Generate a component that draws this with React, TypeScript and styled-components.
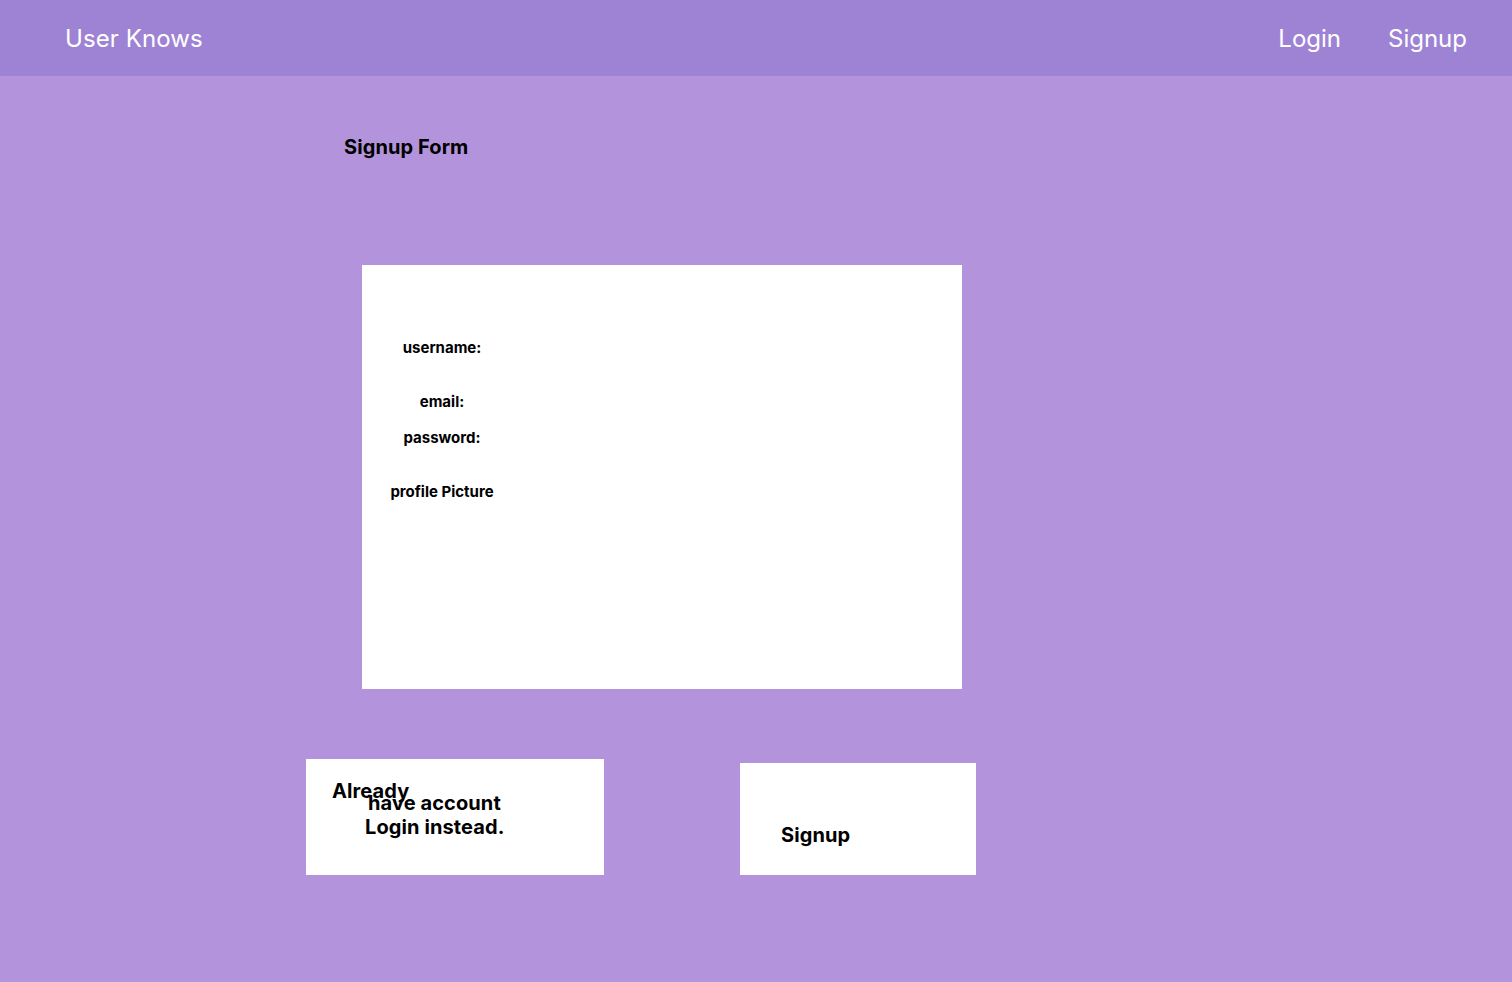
import React from "react";
import styled, { createGlobalStyle } from "styled-components";

const Global = createGlobalStyle`
  html, body { margin: 0; padding: 0; }
  body {
    background: #b394dc;
    font-family: Inter, "Noto Sans", sans-serif;
    min-height: 982px;
  }
`;

const Header = styled.header`
  height: 76px;
  background: #9e83d5;
  display: flex;
  align-items: center;
  justify-content: space-between;
  padding: 0 45px 0 65px;
  color: #ffffff;
`;

const Brand = styled.div`
  font-size: 24px;
  font-weight: 400;
  letter-spacing: 0.1px;
`;

const Nav = styled.nav`
  display: flex;
  gap: 47px;
`;

const NavLink = styled.a`
  font-size: 24px;
  color: #ffffff;
  text-decoration: none;
  cursor: pointer;
`;

const Main = styled.main`
  padding-top: 59px;
  display: flex;
  flex-direction: column;
`;

const Title = styled.h1`
  margin: 0 0 106px 344px;
  font-size: 20px;
  line-height: 24px;
  font-weight: 700;
  color: #000;
  letter-spacing: 0.1px;
`;

const FormCard = styled.form`
  margin-left: 362px;
  width: 600px;
  height: 424px;
  background: #ffffff;
  padding-top: 74px;
  box-sizing: border-box;
  display: flex;
  flex-direction: column;
`;

const Field = styled.div<{ $after: number }>`
  width: 160px;
  text-align: center;
  font-size: 15px;
  line-height: 18px;
  margin-bottom: ${(p) => p.$after}px;
`;

const Label = styled.label`
  display: block;
  font-size: 15px;
  line-height: 18px;
  font-weight: 700;
  color: #000;
`;

const Actions = styled.div`
  margin-top: 70px;
  margin-left: 306px;
  display: flex;
  align-items: flex-end;
  gap: 136px;
`;

const LoginBox = styled.button`
  width: 298px;
  height: 116px;
  background: #fff;
  border: none;
  padding: 20px 0 0 26px;
  box-sizing: border-box;
  display: flex;
  flex-direction: column;
  align-items: flex-start;
  font-family: inherit;
  font-size: 20px;
  line-height: 24px;
  font-weight: 700;
  color: #000;
  text-align: left;
  cursor: pointer;
  letter-spacing: 0.1px;
`;

const Line = styled.span<{ $indent: number; $pull?: number }>`
  display: block;
  margin-left: ${(p) => p.$indent}px;
  margin-top: ${(p) => -(p.$pull ?? 0)}px;
  white-space: nowrap;
`;

const SignupBox = styled.button`
  width: 236px;
  height: 112px;
  background: #fff;
  border: none;
  padding: 60px 0 0 41px;
  box-sizing: border-box;
  display: flex;
  align-items: flex-start;
  font-family: inherit;
  font-size: 20px;
  line-height: 24px;
  font-weight: 700;
  color: #000;
  cursor: pointer;
  letter-spacing: 0.1px;
`;

export default function App() {
  return (
    <>
      <Global />
      <Header>
        <Brand>User Knows</Brand>
        <Nav>
          <NavLink>Login</NavLink>
          <NavLink>Signup</NavLink>
        </Nav>
      </Header>
      <Main>
        <Title>Signup Form</Title>
        <FormCard onSubmit={(e) => e.preventDefault()}>
          <Field $after={36}>
            <Label>username:</Label>
          </Field>
          <Field $after={18}>
            <Label>email:</Label>
          </Field>
          <Field $after={36}>
            <Label>password:</Label>
          </Field>
          <Field $after={0}>
            <Label>profile Picture</Label>
          </Field>
        </FormCard>
        <Actions>
          <LoginBox type="button">
            <Line $indent={0}>Already</Line>
            <Line $indent={36} $pull={12}>have account</Line>
            <Line $indent={33}>Login instead.</Line>
          </LoginBox>
          <SignupBox type="button">Signup</SignupBox>
        </Actions>
      </Main>
    </>
  );
}
